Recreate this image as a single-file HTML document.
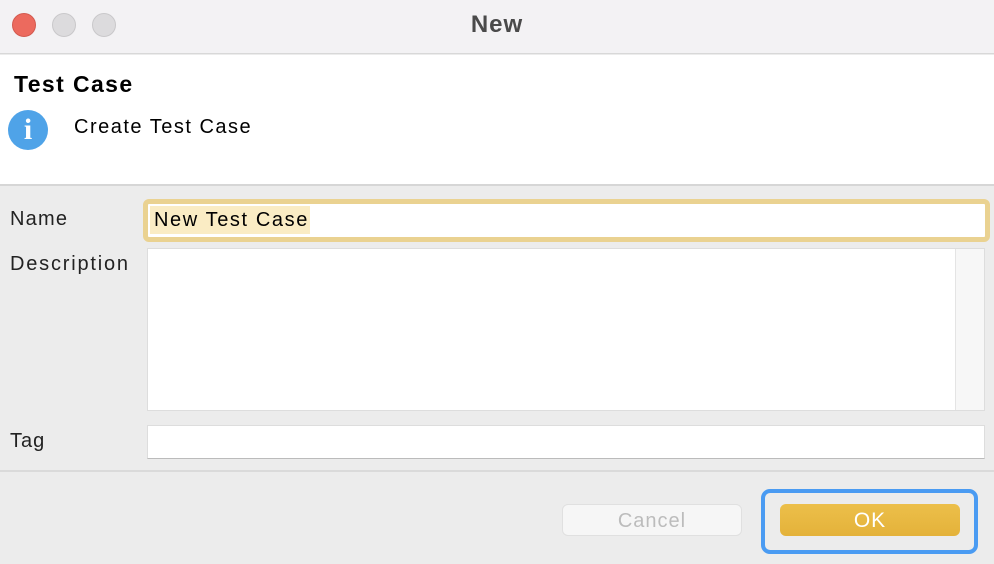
<!DOCTYPE html>
<html><head><style>
body{margin:0;width:994px;height:564px;overflow:hidden;background:#ececec;font-family:"Liberation Sans",sans-serif;position:relative}
div{position:absolute;box-sizing:border-box}
.dot{width:24px;height:24px;border-radius:50%;top:13px}
.t{letter-spacing:1.5px}
</style></head><body>
<div style="left:0;top:0;width:994px;height:54px;background:#f3f2f4;border-bottom:1px solid #d8d8d8"></div>
<div class="dot" style="left:12px;background:#ec6a5e;border:1px solid #d35a4f"></div>
<div class="dot" style="left:52px;background:#dcdbdd;border:1px solid #c9c8ca"></div>
<div class="dot" style="left:92px;background:#dcdbdd;border:1px solid #c9c8ca"></div>
<div style="left:0;top:11px;width:994px;text-align:center;font-size:24px;font-weight:bold;color:#4a4a4a;letter-spacing:1px">New</div>
<div style="left:0;top:55px;width:994px;height:131px;background:#fff;border-bottom:2px solid #d6d6d6"></div>
<div class="t" style="left:14px;top:71px;font-size:23px;font-weight:bold;color:#000;letter-spacing:1.4px">Test Case</div>
<div style="left:8px;top:110px;width:40px;height:40px;border-radius:50%;background:#4fa3e8;color:#fff;font-family:'Liberation Serif',serif;font-weight:bold;font-size:30px;text-align:center;line-height:40px">i</div>
<div class="t" style="left:74px;top:116px;font-size:20px;color:#000">Create Test Case</div>
<div class="t" style="left:10px;top:208px;font-size:20px;color:#222;letter-spacing:1.2px">Name</div>
<div style="left:143px;top:199px;width:847px;height:43px;border:5px solid #ead291;border-radius:6px;background:#fff"></div>
<div style="left:150px;top:206px;height:28px;width:160px;background:#faecc4"></div>
<div class="t" style="left:154px;top:209px;font-size:20px;color:#000;letter-spacing:1.6px">New Test Case</div>
<div class="t" style="left:10px;top:253px;font-size:20px;color:#222;letter-spacing:1.8px">Description</div>
<div style="left:147px;top:248px;width:838px;height:163px;background:#fff;border:1px solid #ddd"></div>
<div style="left:955px;top:249px;width:29px;height:161px;background:#f7f7f7;border-left:1px solid #e4e4e4"></div>
<div class="t" style="left:10px;top:430px;font-size:20px;color:#222;letter-spacing:1px">Tag</div>
<div style="left:147px;top:425px;width:838px;height:34px;background:#fff;border:1px solid #ddd;border-bottom:1px solid #bbb"></div>
<div style="left:0;top:470px;width:994px;height:2px;background:#dadada"></div>
<div class="t" style="left:562px;top:504px;width:180px;height:32px;background:#f6f6f6;border:1px solid #e0e0e0;border-radius:6px;text-align:center;line-height:32px;font-size:20px;color:#bcbcbc;letter-spacing:1px">Cancel</div>
<div style="left:761px;top:489px;width:217px;height:65px;border:4px solid #4a9bf2;border-radius:9px"></div>
<div class="t" style="left:780px;top:504px;width:180px;height:32px;background:linear-gradient(#ecbf4a,#e4b23a);border-radius:6px;text-align:center;line-height:33px;font-size:21px;color:#fff;letter-spacing:1px">OK</div>
</body></html>
